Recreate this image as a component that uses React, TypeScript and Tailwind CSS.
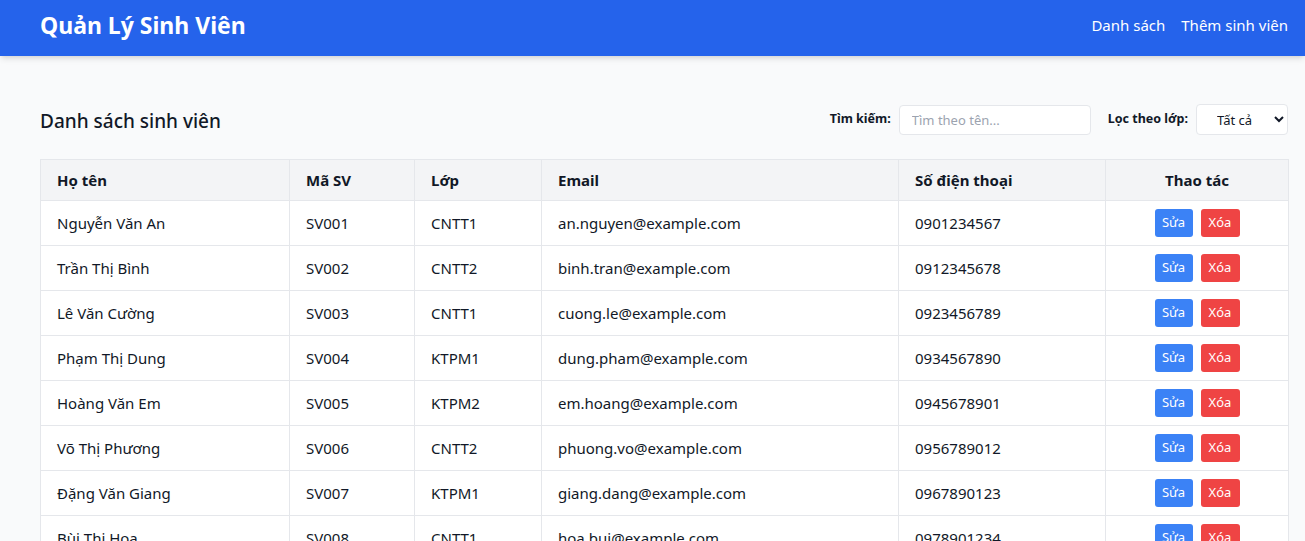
import { useState } from "react"

const students = [
    { name: "Nguyễn Văn An", id: "SV001", cls: "CNTT1", email: "an.nguyen@example.com", phone: "0901234567" },
    { name: "Trần Thị Bình", id: "SV002", cls: "CNTT2", email: "binh.tran@example.com", phone: "0912345678" },
    { name: "Lê Văn Cường", id: "SV003", cls: "CNTT1", email: "cuong.le@example.com", phone: "0923456789" },
    { name: "Phạm Thị Dung", id: "SV004", cls: "KTPM1", email: "dung.pham@example.com", phone: "0934567890" },
    { name: "Hoàng Văn Em", id: "SV005", cls: "KTPM2", email: "em.hoang@example.com", phone: "0945678901" },
    { name: "Võ Thị Phương", id: "SV006", cls: "CNTT2", email: "phuong.vo@example.com", phone: "0956789012" },
    { name: "Đặng Văn Giang", id: "SV007", cls: "KTPM1", email: "giang.dang@example.com", phone: "0967890123" },
    { name: "Bùi Thị Hoa", id: "SV008", cls: "CNTT1", email: "hoa.bui@example.com", phone: "0978901234" },
]

export default function App() {
    const [query, setQuery] = useState("")
    const [cls, setCls] = useState("")

    return <div className="min-h-screen bg-[#f9fafb] text-[#111827] font-['Noto_Sans',sans-serif]">
        <header className="h-14 bg-[#2563eb] shadow-md flex items-center justify-between pl-10 pr-[17px] pb-[6px]">
            <h1 className="text-[23px] font-bold text-white">Quản Lý Sinh Viên</h1>
            <nav className="flex gap-4 text-white text-[15px]">
                <a href="#">Danh sách</a>
                <a href="#">Thêm sinh viên</a>
            </nav>
        </header>

        <main className="pl-10 pr-[17px] pt-12">
            <div className="flex items-center justify-between h-[31px] mb-[24px]">
                <h2 className="text-[19px] font-medium mt-[3px]">Danh sách sinh viên</h2>
                <div className="flex items-center gap-[17px] text-[12.5px]">
                    <label className="flex items-center gap-2 font-bold">
                        Tìm kiếm:
                        <input
                            value={query}
                            onChange={e => setQuery(e.target.value)}
                            placeholder="Tìm theo tên..."
                            className="w-[192px] h-[30px] px-3 bg-white border border-[#e5e7eb] rounded font-normal text-[13px] placeholder:text-[#9ca3af] outline-none"
                        />
                    </label>
                    <label className="flex items-center gap-2 font-bold">
                        Lọc theo lớp:
                        <select
                            value={cls}
                            onChange={e => setCls(e.target.value)}
                            className="w-[92px] h-[31px] pl-4 bg-white border border-[#e5e7eb] rounded font-normal text-[13px]"
                        >
                            <option value="">Tất cả</option>
                            <option value="CNTT1">CNTT1</option>
                            <option value="CNTT2">CNTT2</option>
                            <option value="KTPM1">KTPM1</option>
                            <option value="KTPM2">KTPM2</option>
                        </select>
                    </label>
                </div>
            </div>

            <table className="w-full table-fixed border-collapse bg-white text-[15px]">
                <colgroup>
                    <col className="w-[249px]" />
                    <col className="w-[125px]" />
                    <col className="w-[127px]" />
                    <col className="w-[357px]" />
                    <col className="w-[207px]" />
                    <col className="w-[183px]" />
                </colgroup>
                <thead>
                    <tr className="bg-[#f3f4f6] h-[41px]">
                        <th className="border border-[#e5e7eb] px-4 text-left font-bold">Họ tên</th>
                        <th className="border border-[#e5e7eb] px-4 text-left font-bold">Mã SV</th>
                        <th className="border border-[#e5e7eb] px-4 text-left font-bold">Lớp</th>
                        <th className="border border-[#e5e7eb] px-4 text-left font-bold">Email</th>
                        <th className="border border-[#e5e7eb] px-4 text-left font-bold">Số điện thoại</th>
                        <th className="border border-[#e5e7eb] px-4 text-center font-bold">Thao tác</th>
                    </tr>
                </thead>
                <tbody>
                    {students.map(s => (
                        <tr key={s.id} className="h-[45px]">
                            <td className="border border-[#e5e7eb] px-4">{s.name}</td>
                            <td className="border border-[#e5e7eb] px-4">{s.id}</td>
                            <td className="border border-[#e5e7eb] px-4">{s.cls}</td>
                            <td className="border border-[#e5e7eb] px-4">{s.email}</td>
                            <td className="border border-[#e5e7eb] px-4">{s.phone}</td>
                            <td className="border border-[#e5e7eb] px-4">
                                <div className="flex justify-center gap-2 text-[13px] text-white">
                                    <button className="w-[38px] h-[28px] rounded-[3px] bg-[#3b82f6]">Sửa</button>
                                    <button className="w-[39px] h-[28px] rounded-[3px] bg-[#ef4444]">Xóa</button>
                                </div>
                            </td>
                        </tr>
                    ))}
                </tbody>
            </table>
        </main>
    </div>
}
